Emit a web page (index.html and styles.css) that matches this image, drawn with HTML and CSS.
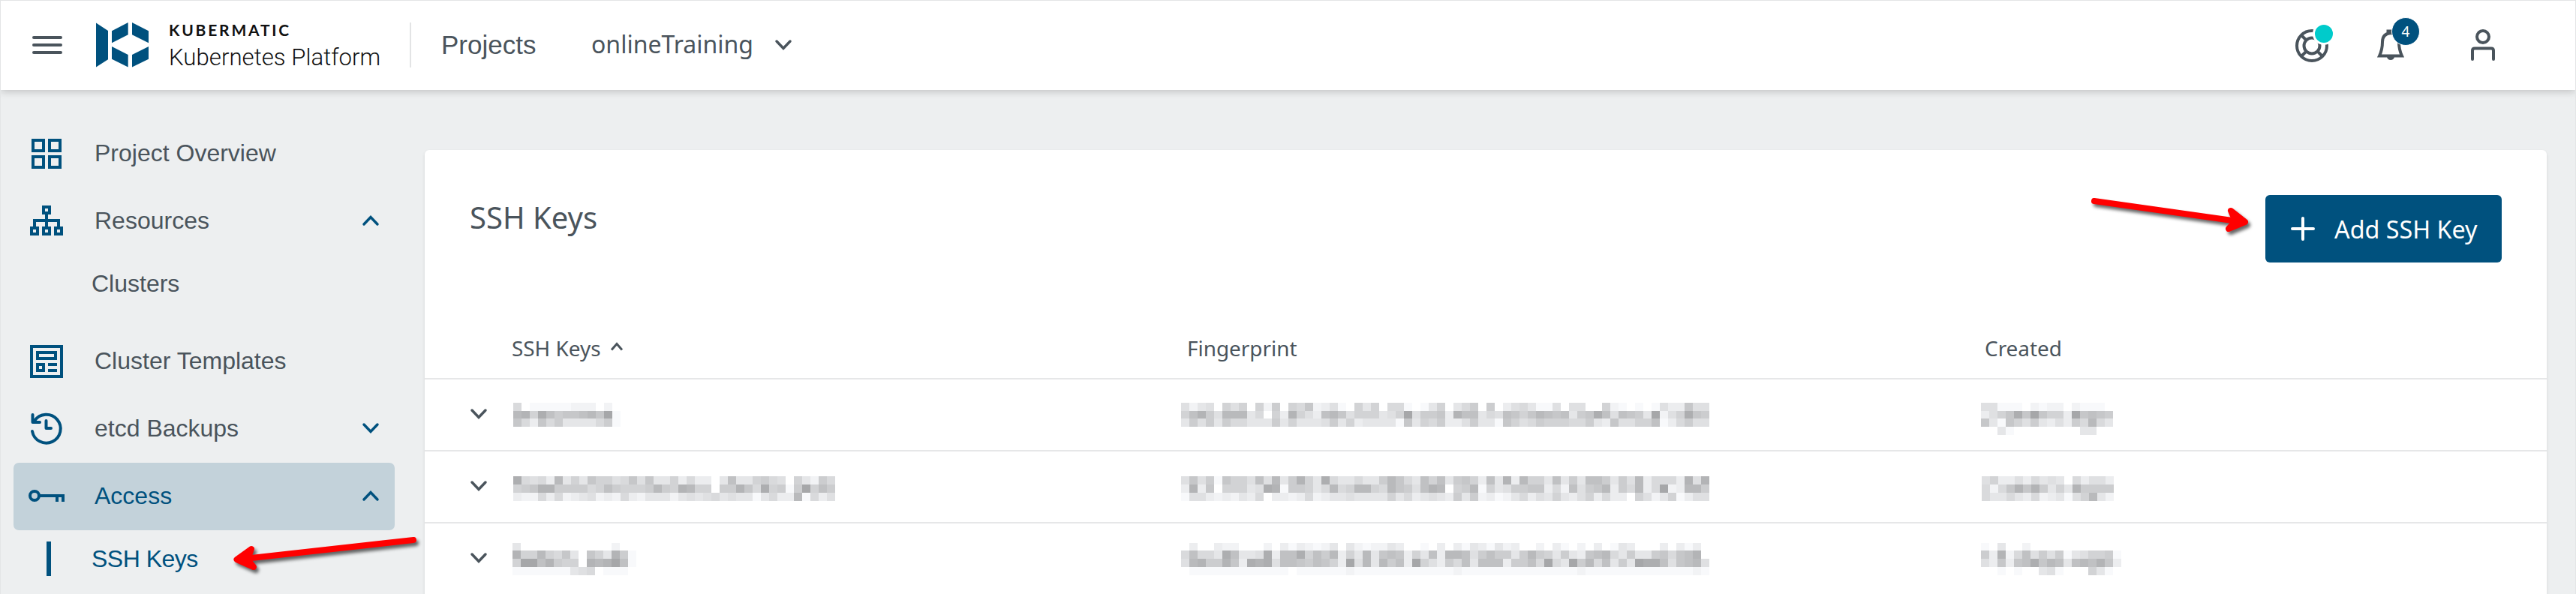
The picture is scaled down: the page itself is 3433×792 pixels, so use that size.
FILE: index.html
```html
<!DOCTYPE html>
<html lang="en">
<head>
<meta charset="utf-8">
<title>SSH Keys</title>
<link rel="stylesheet" href="styles.css">
</head>
<body>
<div class="app">
  <header class="topbar">
    <svg class="menu-icon" width="40" height="24" viewBox="0 0 40 24"><path d="M2 2H38M2 12H38M2 22H38" /></svg>
    <svg class="logo" width="70" height="60" viewBox="0 0 70 60">
      <path d="M0 .5L16 11V49.300L0 59.500ZM21 11.300L42.700 0V16.300L21 27.300ZM48 0L70 11.300V27.300L48 16.300ZM21 32L42.700 43V59.500L21 48.700ZM70 32L48 43V59.500L70 48.700Z"/>
    </svg>
    <div class="brand">
      <span class="brand-name">KUBERMATIC</span>
      <span class="brand-product">Kubernetes Platform</span>
    </div>
    <div class="divider"></div>
    <span class="projects">Projects</span>
    <span class="project-name">onlineTraining</span>
    <svg class="chevron" width="22" height="14" viewBox="0 0 22 14"><path d="M2 2L11 11.500L20 2"/></svg>
    <div class="actions">
      <div class="action help">
        <svg width="44" height="44" viewBox="0 0 44 44"><circle cx="22" cy="22" r="20"/><circle cx="22" cy="22" r="10.500"/><path d="M8 8L14.500 14.500M36 8L29.500 14.500M8 36L14.500 29.500M36 36L29.500 29.500"/></svg>
        <span class="dot"></span>
      </div>
      <div class="action bell">
        <svg width="36" height="42" viewBox="0 0 36 42"><path d="M3 35.500Q7 27 7 17Q7 6 18 5Q29 6 29 17Q29 27 33 35.500Z"/><path d="M14.500 4V2.500H21.500V4"/><path class="solid" d="M13 37H23Q22 41 18 41Q14 41 13 37Z"/></svg>
        <span class="badge">4</span>
      </div>
      <div class="action user">
        <svg width="32" height="42" viewBox="0 0 32 42"><circle cx="16" cy="10" r="8"/><path class="round" d="M2 40V28.500Q2 25.500 5 25.500H27Q30 25.500 30 28.500V40"/></svg>
      </div>
    </div>
  </header>
  <div class="body">
    <nav class="sidebar">
      <a class="item"><svg class="icon" width="48" height="44" viewBox="0 0 48 44"><path d="M6 4H20V18H6ZM28 4H42V18H28ZM6 26H20V40H6ZM28 26H42V40H28Z"/></svg><span>Project Overview</span></a>
      <a class="item tall"><svg class="icon" width="48" height="44" viewBox="0 0 48 44"><path d="M20 4H28V12H20ZM4 32H12V40H4ZM20 32H28V40H20ZM36 32H44V40H36ZM24 12V32M8 32V22H40V32"/></svg><span>Resources</span><svg class="chevron blue" width="22" height="14" viewBox="0 0 22 14"><path d="M2 12L11 2.500L20 12"/></svg></a>
      <a class="sub clusters">Clusters</a>
      <a class="item"><svg class="icon" width="48" height="44" viewBox="0 0 48 44"><path d="M4 2H44V42H4Z"/><path d="M12 10H36V18H12ZM12 26H20V34H12ZM26 26H38M26 34H38"/></svg><span>Cluster Templates</span></a>
      <a class="item tall"><svg class="icon" width="48" height="44" viewBox="0 0 48 44"><path class="round" d="M5 26A19 19 0 1 0 8 12M5.500 4V14H15M23.500 12V22H30"/></svg><span>etcd Backups</span><svg class="chevron blue" width="22" height="14" viewBox="0 0 22 14"><path d="M2 2L11 11.500L20 2"/></svg></a>
      <a class="item tall active"><svg class="icon" width="48" height="44" viewBox="0 0 48 44"><circle cx="8" cy="22" r="6"/><path d="M14 22H48M38 22V30M46 22V30"/></svg><span>Access</span><svg class="chevron blue" width="22" height="14" viewBox="0 0 22 14"><path d="M2 12L11 2.500L20 12"/></svg></a>
      <a class="sub current">SSH Keys</a>
    </nav>
    <main class="card">
      <div class="card-head">
        <h1>SSH Keys</h1>
        <button class="add"><svg width="32" height="32" viewBox="0 0 32 32"><path d="M2 16H30M16 2V30"/></svg><span>Add SSH Key</span></button>
      </div>
      <div class="grid head">
        <span></span>
        <span class="sort"><span class="th-keys">SSH Keys</span><svg width="18" height="12" viewBox="0 0 18 12"><path d="M2 10.500L9 2.500L16 10.500"/></svg></span>
        <span class="th-finger">Fingerprint</span><span class="th-created">Created</span>
      </div>
      <div id="rows"></div>
    </main>
  </div>
  <svg class="arrow arrow-left" width="270" height="80" viewBox="0 0 270 80"><path d="M251 20L26 45"/><path class="tip" d="M35 32L15.500 46L38 56L30 46Z"/></svg>
  <svg class="arrow arrow-right" width="240" height="70" viewBox="0 0 240 70"><path d="M11 18L202 45"/><path class="tip" d="M193 31L212 46L190 55L199 45Z"/></svg>
</div>
<script src="rows.js"></script>
</body>
</html>
```
FILE: styles.css
```css
* { box-sizing: border-box; }
body { margin: 0; background: #edeff0; color: #4a545c; font-family: "Noto Sans", sans-serif; }
svg { display: block; flex: none; fill: none; stroke: currentColor; stroke-width: 4; overflow: visible; }
.round { stroke-linecap: round; stroke-linejoin: round; }
.solid { fill: currentColor; stroke: none; }
.app { position: relative; width: 3433px; height: 792px; overflow: hidden; border: solid #e3e5e6; border-width: 1px 1px 0; }
.topbar { position: relative; display: flex; align-items: center; height: 119px; padding: 0 0 1px 42px; background: #fff; box-shadow: 0 2px 10px rgba(0,0,0,.2); white-space: nowrap; }
.menu-icon { stroke-linecap: round; }
.logo { margin-left: 45px; fill: #00517e; stroke: none; }
.brand { display: flex; flex-direction: column; width: 321px; margin-left: 27px; padding-top: 5px; color: #111; }
.brand-name { font: 700 21px/24px Lato, sans-serif; letter-spacing: 2.800px; }
.brand-product { margin-top: 4px; font: 300 31.200px/42px Roboto, sans-serif; }
.divider { width: 2px; height: 60px; background: #e3e4e5; }
.projects { width: 200px; margin-left: 40px; font: 35px/50px "Liberation Sans", sans-serif; }
.project-name { width: 245px; padding-bottom: 3px; font-size: 32px; line-height: 50px; }
.chevron { stroke-width: 3.500; stroke-linecap: round; }
.blue { color: #00517e; }
.actions { display: flex; gap: 65px; align-items: center; margin-left: auto; margin-right: 107px; }
.action { position: relative; }
.help { padding-top: 2px; }
.bell { margin-right: 24px; }
.dot, .badge { position: absolute; border-radius: 50%; }
.dot { left: 23px; top: -7px; width: 30px; height: 30px; border: 3px solid #fff; background: #00cbcb; }
.badge { left: 19px; top: -16px; width: 38px; height: 38px; border: 1px solid #fff; background: #00517e; color: #fff; text-align: center; font-size: 19px; line-height: 36px; }
.body { display: flex; }
.sidebar { width: 565px; padding: 40px 40px 0 17px; font: 32px/1.2 "Liberation Sans", sans-serif; white-space: nowrap; }
.item { display: flex; align-items: center; height: 89px; padding: 0 21px 0 20px; border-radius: 7px; }
.item.tall { height: 90px; }
.item .chevron { margin-left: auto; }
.icon { width: 48px; margin-right: 40px; color: #00517e; }
.item.active { margin-top: 1px; padding-bottom: 2px; background: #c3d2da; color: #00517e; }
.sub { display: flex; align-items: center; height: 78px; padding-left: 104px; }
.clusters { margin-bottom: 20px; }
.current { height: 76px; padding-left: 0; color: #00517e; letter-spacing: -.500px; }
.current::before { content: ""; width: 6px; height: 46px; margin: 0 54px 0 44px; background: #00517e; }
.card { width: 2828px; height: 620px; margin-top: 80px; background: #fff; border-radius: 6px; box-shadow: 0 2px 4px rgba(0,0,0,.1); white-space: nowrap; }
.card-head { display: flex; justify-content: space-between; align-items: flex-start; height: 209px; padding: 60px 60px 0; }
h1 { margin: 0; font-size: 40px; line-height: 60px; font-weight: 400; }
.add { display: flex; align-items: center; width: 315px; height: 90px; padding: 0 0 0 34px; border: 0; border-radius: 6px; background: #00517e; color: #fff; font: 32.300px "Noto Sans", sans-serif; }
.add svg { stroke-linecap: round; margin-right: 26px; }
.grid { display: grid; grid-template-columns: 116px 900px 1063px 1fr; height: 96px; }
.head { height: 95px; align-items: center; font-size: 27.900px; line-height: 40px; padding-top: 14px; }
.sort { display: flex; align-items: center; }
.sort svg { margin: -4px 0 0 12px; stroke-width: 3; }
.row { border-top: 2px solid #e6e7e8; align-items: start; }
.row .chevron { margin: 39px 0 0 61px; }
.mosaic { shape-rendering: crispEdges; stroke: none; }
.arrow { position: absolute; color: #f00; stroke-width: 8; stroke-linecap: round; stroke-linejoin: round; filter: drop-shadow(3px 4px 2px rgba(0,0,0,.6)); }
.tip { fill: #f00; }
.arrow-left { left: 299px; top: 699px; }
.arrow-right { left: 2779px; top: 249px; }
```
FILE: rows.js
```js
// Redacted cells: one hex digit per tile, 0 = darkest, f = white.
const rows = [
  { top: 31, edges: [0, 11, 21, 32, 43], x: [2, -8, -5], cells: [
    ["9feeeeedddfdf", "438257665461e", "69c697bbbb97e"],
    ["adbaf8a8f8d7f896dcaef8b8f99efeb8fb97f7fca9beeafaaff8defefeacc6aa",
     "8537a444b9f8c38ac546a888ba81a776c355b9a56864565b7625a567b1da8267",
     "b7a7b799bbb7b8bbba7b8cbbbbe6b897cca7bbe68a97888997bc6aa885ec97aa"],
    ["aaeeefdeddfdeeef", "ca86261688c16567", "6be68a7bcac7949b", "ffbeffffffffbbff"]] },
  { top: 33, edges: [0, 11, 22, 33, 43], x: [2, -8, -4], cells: [
    ["29a9c4b8b688a96a6bb8c9ccfb5bb879af8bd79", "876337777985788874783488f77369287e71857", "cdd9c9dcbadcd9cdbbbdbaba9babbeb9cc4e9ca"],
    ["a6a7e688a5a4b738b29bb9bb7469b585b768c5b3c488b5b7b557b7a4c999c3a3",
     "c3c6f888ba23e778b94984489467a534f874e8ba7766c9d5a764c794c91dc447",
     "eaacdcdbc9fccdc9dcbbabbbb8b9cbabc7b7dcedb9cab8bca8c9ccf8adb8ecaa"],
    ["a8ccac9babf9caac", "9d963637b8b37777", "9bb9bc9dcbea84bd"]] },
  { top: 26, edges: [0, 10, 21, 32, 43], x: [1, -8, -5], cells: [
    ["bfffffffffffdff", "3884896bf68b37e", "81153788f34315e", "eeeeeeeba9feeef"],
    ["fcffcddfffdfcecdedbfbdeddbcffefcfcebcebdcffdfcefdfcfebcfffcfcecf",
     "9599b25bba2c5528574c8b4b656c8b5c445a7577b7478b7bc6549b7bb769653f",
     "a437736c232a5567568c1a4b475c18ac795b555c775919b17495b7b1225a654a",
     "feeeeeeeeeeeefeeeeeedeeeeeeeeeeeedeeeeeeeeeeeeeedeeeeeeeeeeeeede"],
    ["efbffdfffffffffff", "7c3d95a7a7eba887e", "ac6c652645b54536c", "ffefeffbaefff8bef"]] }
];

function mosaic(lines, edges, top, x) {
  let rects = "";
  lines.forEach((line, r) => [...line].forEach((c, i) => {
    if (c === "f") return;
    const g = Math.round(160 + 6.3 * parseInt(c, 16));
    rects += `<rect x="${i * 11}" y="${edges[r]}" width="11" height="${edges[r + 1] - edges[r]}" fill="rgb(${g},${g + 1},${g + 3})"/>`;
  }));
  return `<svg class="mosaic" width="${lines[0].length * 11}" height="${edges[lines.length]}" style="margin-top:${top}px;margin-left:${x}px">${rects}</svg>`;
}

document.getElementById("rows").innerHTML = rows.map(row =>
  `<div class="grid row"><svg class="chevron" width="22" height="14" viewBox="0 0 22 14"><path d="M2 2L11 11.500L20 2"/></svg>` +
  row.cells.map((c, i) => mosaic(c, row.edges, row.top, row.x[i])).join("") + `</div>`).join("");
```
